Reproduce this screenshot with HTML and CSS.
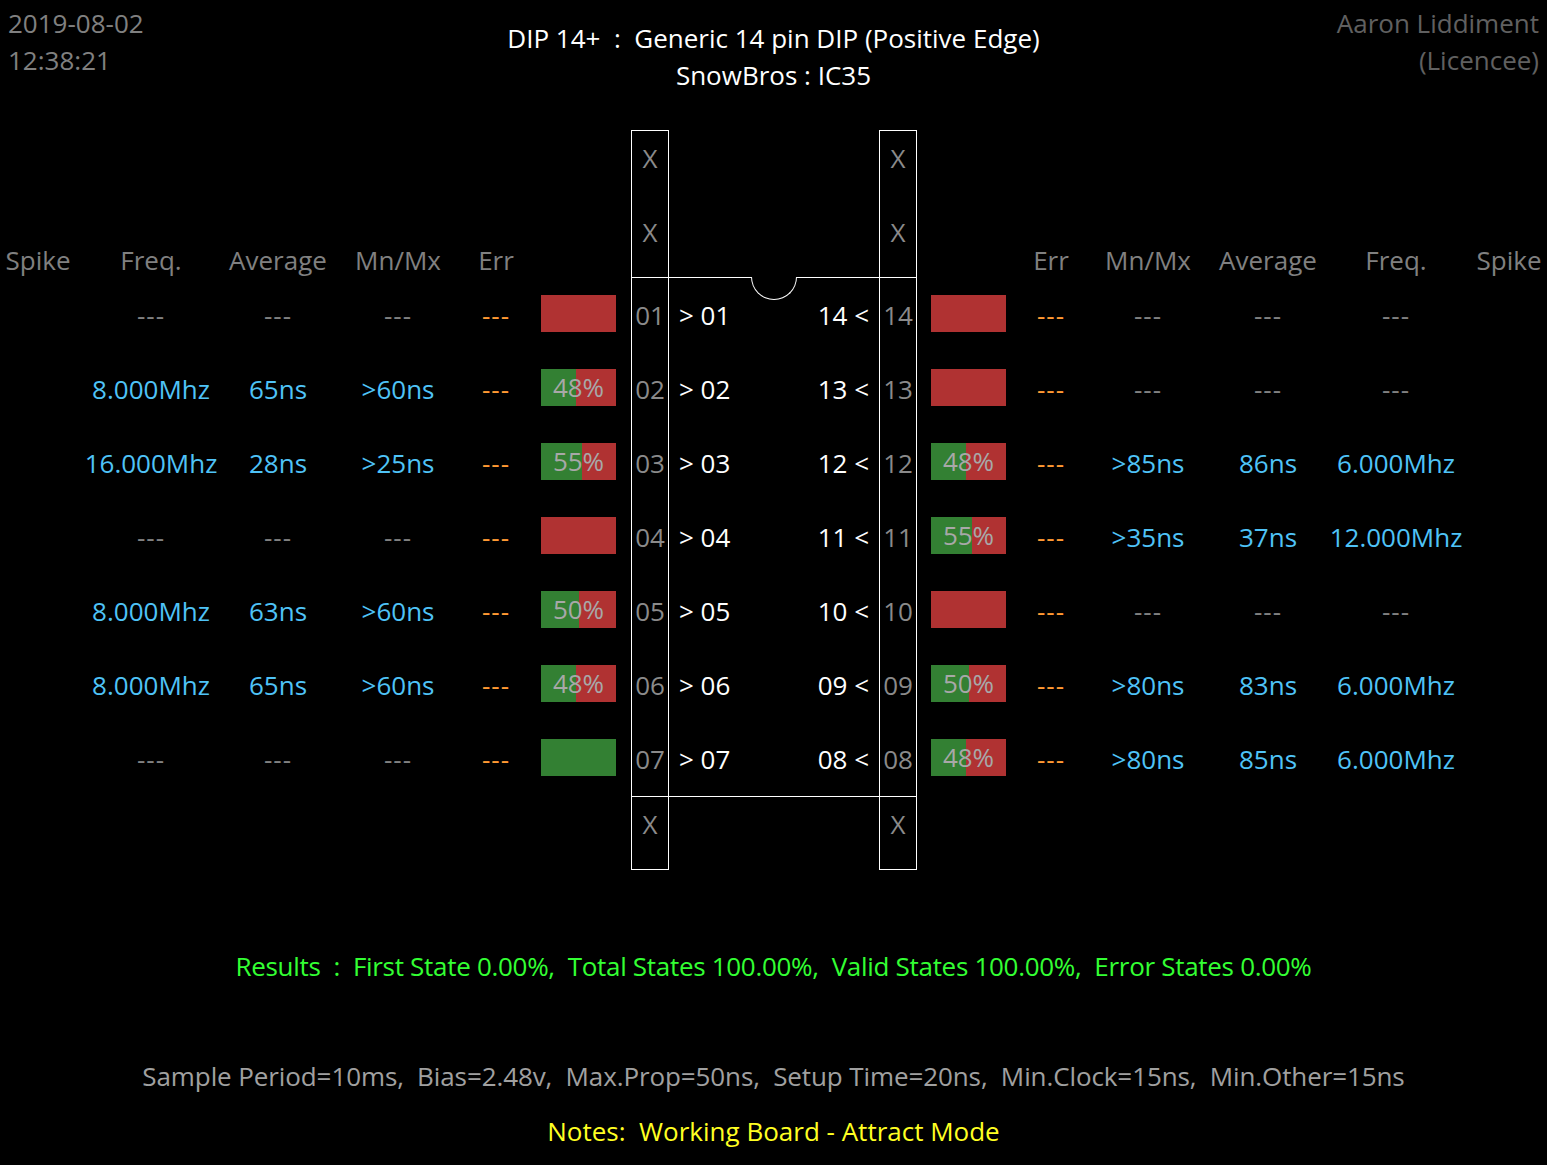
FILE: index.html
```html
<!DOCTYPE html>
<html lang="en">
<head>
    <meta charset="UTF-8">
    <title>DIP 14+ : Generic 14 pin DIP (Positive Edge)</title>
    <link rel="stylesheet" href="styles.css">
</head>
<body>
    <div class="top">
        <div class="stamp">2019-08-02<br>12:38:21</div>
        <div class="title">DIP 14+&nbsp; :&nbsp; Generic 14 pin DIP (Positive Edge)<br>SnowBros : IC35</div>
        <div class="licence">Aaron Liddiment<br>(Licencee)</div>
    </div>

    <div class="board">
        <!-- left pins 01-07 -->
        <div class="side side-left">
            <div class="hd">Spike</div><div class="hd">Freq.</div><div class="hd">Average</div><div class="hd">Mn/Mx</div><div class="hd">Err</div><div></div>

            <div class="v"></div><div class="v dash">---</div><div class="v dash">---</div><div class="v dash">---</div><div class="v err">---</div>
            <div class="bar-cell"><div class="bar"><div class="fill" style="width:0%"></div></div></div>

            <div class="v"></div><div class="v val">8.000Mhz</div><div class="v val">65ns</div><div class="v val">&gt;60ns</div><div class="v err">---</div>
            <div class="bar-cell"><div class="bar"><div class="fill" style="width:47%"></div><span class="pct">48%</span></div></div>

            <div class="v"></div><div class="v val">16.000Mhz</div><div class="v val">28ns</div><div class="v val">&gt;25ns</div><div class="v err">---</div>
            <div class="bar-cell"><div class="bar"><div class="fill" style="width:54%"></div><span class="pct">55%</span></div></div>

            <div class="v"></div><div class="v dash">---</div><div class="v dash">---</div><div class="v dash">---</div><div class="v err">---</div>
            <div class="bar-cell"><div class="bar"><div class="fill" style="width:0%"></div></div></div>

            <div class="v"></div><div class="v val">8.000Mhz</div><div class="v val">63ns</div><div class="v val">&gt;60ns</div><div class="v err">---</div>
            <div class="bar-cell"><div class="bar"><div class="fill" style="width:50%"></div><span class="pct">50%</span></div></div>

            <div class="v"></div><div class="v val">8.000Mhz</div><div class="v val">65ns</div><div class="v val">&gt;60ns</div><div class="v err">---</div>
            <div class="bar-cell"><div class="bar"><div class="fill" style="width:47%"></div><span class="pct">48%</span></div></div>

            <div class="v"></div><div class="v dash">---</div><div class="v dash">---</div><div class="v dash">---</div><div class="v err">---</div>
            <div class="bar-cell"><div class="bar"><div class="fill" style="width:100%"></div></div></div>
        </div>

        <!-- chip outline -->
        <div class="chip">
            <div class="pin-col">
                <div class="pin-top"><div class="xcell">X</div><div class="xcell">X</div></div>
                <div class="pin">01</div><div class="pin">02</div><div class="pin">03</div><div class="pin">04</div>
                <div class="pin">05</div><div class="pin">06</div><div class="pin">07</div>
                <div class="pin-bottom">X</div>
            </div>
            <div class="chip-body">
                <div class="notch"></div>
                <div class="row"><span>&gt; 01</span><span>14 &lt;</span></div>
                <div class="row"><span>&gt; 02</span><span>13 &lt;</span></div>
                <div class="row"><span>&gt; 03</span><span>12 &lt;</span></div>
                <div class="row"><span>&gt; 04</span><span>11 &lt;</span></div>
                <div class="row"><span>&gt; 05</span><span>10 &lt;</span></div>
                <div class="row"><span>&gt; 06</span><span>09 &lt;</span></div>
                <div class="row"><span>&gt; 07</span><span>08 &lt;</span></div>
            </div>
            <div class="pin-col">
                <div class="pin-top"><div class="xcell">X</div><div class="xcell">X</div></div>
                <div class="pin">14</div><div class="pin">13</div><div class="pin">12</div><div class="pin">11</div>
                <div class="pin">10</div><div class="pin">09</div><div class="pin">08</div>
                <div class="pin-bottom">X</div>
            </div>
        </div>

        <!-- right pins 14-08 -->
        <div class="side side-right">
            <div></div><div class="hd">Err</div><div class="hd">Mn/Mx</div><div class="hd">Average</div><div class="hd">Freq.</div><div class="hd">Spike</div>

            <div class="bar-cell"><div class="bar"><div class="fill" style="width:0%"></div></div></div>
            <div class="v err">---</div><div class="v dash">---</div><div class="v dash">---</div><div class="v dash">---</div><div class="v"></div>

            <div class="bar-cell"><div class="bar"><div class="fill" style="width:0%"></div></div></div>
            <div class="v err">---</div><div class="v dash">---</div><div class="v dash">---</div><div class="v dash">---</div><div class="v"></div>

            <div class="bar-cell"><div class="bar"><div class="fill" style="width:47%"></div><span class="pct">48%</span></div></div>
            <div class="v err">---</div><div class="v val">&gt;85ns</div><div class="v val">86ns</div><div class="v val">6.000Mhz</div><div class="v"></div>

            <div class="bar-cell"><div class="bar"><div class="fill" style="width:54%"></div><span class="pct">55%</span></div></div>
            <div class="v err">---</div><div class="v val">&gt;35ns</div><div class="v val">37ns</div><div class="v val">12.000Mhz</div><div class="v"></div>

            <div class="bar-cell"><div class="bar"><div class="fill" style="width:0%"></div></div></div>
            <div class="v err">---</div><div class="v dash">---</div><div class="v dash">---</div><div class="v dash">---</div><div class="v"></div>

            <div class="bar-cell"><div class="bar"><div class="fill" style="width:50%"></div><span class="pct">50%</span></div></div>
            <div class="v err">---</div><div class="v val">&gt;80ns</div><div class="v val">83ns</div><div class="v val">6.000Mhz</div><div class="v"></div>

            <div class="bar-cell"><div class="bar"><div class="fill" style="width:47%"></div><span class="pct">48%</span></div></div>
            <div class="v err">---</div><div class="v val">&gt;80ns</div><div class="v val">85ns</div><div class="v val">6.000Mhz</div><div class="v"></div>
        </div>
    </div>

    <p class="results">Results&nbsp; :&nbsp; First State 0.00%,&nbsp; Total States 100.00%,&nbsp; Valid States 100.00%,&nbsp; Error States 0.00%</p>
    <p class="params">Sample Period=10ms,&nbsp; Bias=2.48v,&nbsp; Max.Prop=50ns,&nbsp; Setup Time=20ns,&nbsp; Min.Clock=15ns,&nbsp; Min.Other=15ns</p>
    <p class="notes">Notes:&nbsp; Working Board - Attract Mode</p>
</body>
</html>
```

FILE: styles.css
```css
/* IC tester result screen */
body {
    margin: 0;
    background: #000;
    color: #fff;
    font-family: "Open Sans", "Noto Sans", sans-serif;
    font-size: 26px;
    line-height: 37px;
}

.top {
    height: 130px;
    display: grid;
    grid-template-columns: 1fr auto 1fr;
    padding: 0 8px;
}

.stamp {
    padding-top: 5px;
    color: #808080;
}

.title {
    padding-top: 20px;
    text-align: center;
}

.licence {
    padding-top: 5px;
    text-align: right;
    color: #606060;
}

.board {
    display: flex;
    align-items: flex-start;
    height: 740px;
}

/* side tables */
.side {
    display: grid;
    grid-template-rows: 148px repeat(7, 74px);
    text-align: center;
}

.side-left {
    width: 631px;
    grid-template-columns: 76px 150px 104px 136px 60px 105px;
}

.side-right {
    width: 630px;
    grid-template-columns: 104px 60px 134px 106px 150px 76px;
}

.hd {
    align-self: end;
    line-height: 36px;
    color: #808080;
}

.v {
    line-height: 74px;
    white-space: nowrap;
}

.dash {
    color: #808080;
    letter-spacing: 1px;
}

.err {
    color: #ff9933;
    letter-spacing: 1px;
}

.val {
    color: #4fc3f7;
}

.bar-cell {
    display: flex;
    align-items: center;
}

.side-left .bar-cell {
    padding-left: 15px;
}

.side-right .bar-cell {
    padding-left: 14px;
}

.bar {
    position: relative;
    width: 75px;
    height: 37px;
    margin-top: -3px;
    background: #b03232;
}

.fill {
    height: 100%;
    background: #338033;
}

.pct {
    position: absolute;
    top: 0;
    left: 0;
    right: 0;
    text-align: center;
    line-height: 37px;
    color: #a8a8a8;
}

/* chip */
.chip {
    display: flex;
    align-items: flex-start;
}

.pin-col {
    width: 38px;
    box-sizing: border-box;
    border: 1px solid #fff;
    text-align: center;
    color: #8a8a8a;
}

.pin-top {
    display: flex;
    flex-direction: column;
    height: 146px;
    border-bottom: 1px solid #fff;
}

.xcell {
    flex: none;
    height: 74px;
    line-height: 74px;
}

.pin-top .xcell:first-child {
    margin-top: -10px;
}

.pin {
    height: 74px;
    line-height: 74px;
}

.pin-bottom {
    height: 72px;
    line-height: 54px;
    border-top: 1px solid #fff;
}

.chip-body {
    position: relative;
    width: 210px;
    margin-top: 147px;
    border-top: 1px solid #fff;
    border-bottom: 1px solid #fff;
}

.notch {
    position: absolute;
    top: -1px;
    left: 82px;
    width: 46px;
    height: 23px;
    box-sizing: border-box;
    border: 1px solid #fff;
    border-top: none;
    border-radius: 0 0 23px 23px;
    background: #000;
}

.row {
    height: 74px;
    line-height: 74px;
    display: flex;
    justify-content: space-between;
    padding: 0 10px;
}

/* footer lines */
.results, .params, .notes {
    margin: 0;
    text-align: center;
}

.results {
    margin-top: 78px;
    color: #33ff33;
    letter-spacing: -0.3px;
}

.params {
    margin-top: 73px;
    color: #a0a0a0;
    letter-spacing: -0.1px;
}

.notes {
    margin-top: 18px;
    color: #ffff22;
}
```
